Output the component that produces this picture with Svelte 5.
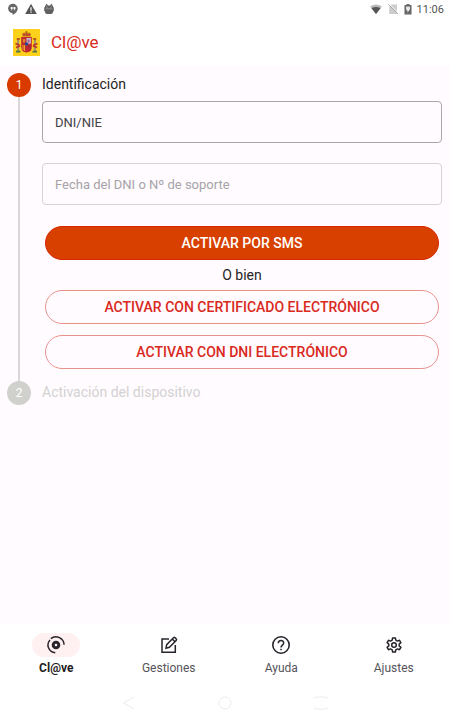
<script>
  const tabs = [
    { id: 'clave', label: 'Cl@ve' },
    { id: 'gestiones', label: 'Gestiones' },
    { id: 'ayuda', label: 'Ayuda' },
    { id: 'ajustes', label: 'Ajustes' }
  ];

  let active = 'clave';
  let dni = '';
  let support = '';
</script>

<div class="screen">
  <div class="status-bar">
    <div class="status-group left">
      <svg width="12" height="12" viewBox="0 0 12 12">
        <path d="M6 0.8a4.7 4.7 0 0 0-.4 9.4V12C8.6 10.6 10.7 8 10.7 5.4A4.7 4.7 0 0 0 6 .8z" fill="#666" />
        <path d="M3.7 4h1.9v2L4.7 7.3H4L4.5 6h-.8zM6.5 4h1.9v2L7.5 7.3h-.7L7.3 6h-.8z" fill="#fff" />
      </svg>
      <svg width="12" height="12" viewBox="0 0 12 12">
        <path d="M6 .8 11.8 11H.2z" fill="#555" />
        <path d="M5.4 4.2h1.2v3.5H5.4zM5.4 8.5h1.2v1.2H5.4z" fill="#fff" />
      </svg>
      <svg width="12" height="12" viewBox="0 0 12 12">
        <path d="M2 2.5h8v1.700h.8v4H10V9A2 2 0 0 1 8 11H4A2 2 0 0 1 2 9v-.8h-.8v-4H2z" fill="#606060" />
        <path d="M3.300 1 4.400 3M8.700 1 7.600 3" stroke="#606060" stroke-width="1.300" />
        <path d="M2.500 5.800h7M4 3.700v1.300M8 3.700v1.300" stroke="#aaa" stroke-width=".7" />
      </svg>
    </div>
    <div class="status-group right">
      <svg width="14" height="12" viewBox="0 0 14 12">
        <path d="M1 3.500Q7-.500 13 3.500L7 11z" fill="#bbb" />
        <path d="M2.500 5.300Q7 2.500 11.500 5.300L7 11z" fill="#555" />
      </svg>
      <svg width="12" height="12" viewBox="0 0 12 12">
        <path d="M4.500 1.500H10v9.500H2.200V4z" fill="#ccc" />
        <path d="M1.500 1.500 11 11" stroke="#aaa" stroke-width="1" />
        <path d="M2.300 1 11.500 10.200" stroke="#fff" stroke-width=".8" />
      </svg>
      <svg width="10" height="12" viewBox="0 0 10 12">
        <path d="M3.500 1h3v1H8.500v9.500h-7V2h2z" fill="#666" />
        <path d="M3 3.500h4v3H3z" fill="#ddd" />
        <path d="M5.500 4 3.300 7.500h1.500L4.300 10 6.800 6.300H5.300z" fill="#fff" />
      </svg>
      <span>11:06</span>
    </div>
  </div>

  <header>
    <svg class="crest" width="27" height="27" viewBox="0 0 27 27" aria-hidden="true">
      <path d="M0 0h27v27H0z" fill="#fbd11c" />
      <!-- crown -->
      <path d="M9.500 7.500 9 4.800Q10.500 3.300 13.500 3.600Q16.500 3.300 18 4.800L17.500 7.500z" fill="#c8741c" />
      <path d="M10.500 5h1.500v1.500h-1.500zM13 5h1.500v1.500H13zM15.500 5H17v1.500h-1.500z" fill="#b5283a" />
      <path d="M13.500 2v2.500M12.500 3h2" stroke="#a65a15" stroke-width=".8" />
      <!-- shield -->
      <path d="M8.200 8h10.600v10q0 5-5.300 5.500-5.300-.5-5.300-5.500z" fill="#c3272f" />
      <path d="M13.500 9h4.300v5.700h-4.300z" fill="#cfbfd0" />
      <path d="M14.500 10.500h2v3h-2z" fill="#9d5f96" />
      <path d="M9.800 10h2.400v3.500H9.800z" fill="#dc8a27" />
      <path d="M10 16v5M11.500 16v6" stroke="#f0b829" stroke-width=".9" />
      <path d="M15 16h2.500v4.500H15z" fill="#a82736" />
      <circle cx="13.500" cy="15" r="1.700" fill="#294e8f" />
      <!-- pillars -->
      <path d="M5.100 11v11M21.900 11v11" stroke="#a58f6a" stroke-width="2" />
      <path d="M3.800 10h3M20.200 10h3" stroke="#bb5820" stroke-width="1.800" />
      <path d="M2.500 14.500 7 16.500M24.500 14.500 20 16.500M3 18.500l4-1.500M24 18.500l-4-1.500" stroke="#bd3529" stroke-width="1.600" />
      <path d="M3 22.700h4.500M19.500 22.700H24" stroke="#56753e" stroke-width="1.800" />
    </svg>
    <h1>Cl@ve</h1>
  </header>

  <main>
    <section class="step">
      <div class="rail">
        <span class="badge">1</span>
        <span class="line"></span>
      </div>
      <div class="step-body">
        <h2>Identificación</h2>
        <form on:submit|preventDefault>
          <input class="field primary" type="text" placeholder="DNI/NIE" aria-label="DNI/NIE" bind:value={dni} />
          <input class="field" type="text" placeholder="Fecha del DNI o Nº de soporte" aria-label="Fecha del DNI o Nº de soporte" bind:value={support} />
          <div class="actions">
            <button class="btn filled" type="submit">ACTIVAR POR SMS</button>
            <p>O bien</p>
            <button class="btn" type="button">ACTIVAR CON CERTIFICADO ELECTRÓNICO</button>
            <button class="btn" type="button">ACTIVAR CON DNI ELECTRÓNICO</button>
          </div>
        </form>
      </div>
    </section>

    <section class="step disabled">
      <div class="rail">
        <span class="badge">2</span>
      </div>
      <div class="step-body">
        <h2>Activación del dispositivo</h2>
      </div>
    </section>
  </main>

  <nav class="tabs">
    {#each tabs as tab}
      <button class="tab" class:active={active === tab.id} on:click={() => (active = tab.id)}>
        <span class="pill">
          <svg width="20" height="20" viewBox="0 0 20 20" fill="none" stroke="currentColor" stroke-width="1.500">
            {#if tab.id === 'clave'}
              <path d="M4.800 3.600A8.200 8.200 0 0 1 18.100 9.800" />
              <path d="M4 5A7.600 7.600 0 0 0 9.300 17.700" />
              <circle cx="10" cy="10" r="2.800" stroke-width="3" />
            {:else if tab.id === 'gestiones'}
              <path d="M10 4H3v13.300h13.300V10" />
              <path d="M7 13.200l.7-3.600L14.500 2.800q.8-.8 1.600 0l1.100 1.100q.8.800 0 1.600L10.400 12.300zM13.300 4l2.700 2.700" />
            {:else if tab.id === 'ayuda'}
              <circle cx="10" cy="10" r="8.200" stroke-width="1.600" />
              <path d="M7.300 8.200C7.300 4.600 12.700 4.700 12.700 8c0 2-2.700 2.300-2.700 4.500M10 13.800v1.500" />
            {:else}
              <path d="M8.600 3h2.800l.4 2.200 1.600.9 2.100-.8 1.400 2.400-1.700 1.400v1.800l1.700 1.400-1.400 2.400-2.100-.8-1.600.9-.4 2.200H8.600l-.4-2.200-1.600-.9-2.100.8-1.400-2.400 1.700-1.400V9.100L3.100 7.700l1.400-2.400 2.100.8 1.600-.9z" stroke-linejoin="round" />
              <circle cx="10" cy="10" r="2.300" />
            {/if}
          </svg>
        </span>
        {tab.label}
      </button>
    {/each}
  </nav>

  <div class="system-nav">
    <button aria-label="Atrás">
      <svg width="14" height="14" viewBox="0 0 14 14"><path d="M12 1 1.500 7 12 13" /></svg>
    </button>
    <button aria-label="Inicio">
      <svg width="14" height="14" viewBox="0 0 14 14"><circle cx="7" cy="7" r="6" /></svg>
    </button>
    <button aria-label="Recientes">
      <svg width="14" height="14" viewBox="0 0 14 14"><path d="M1 3V1h12v2M1 11v2h12v-2" /></svg>
    </button>
  </div>
</div>

<style>
  :global(body) {
    margin: 0;
    background: #fff;
  }

  .screen {
    display: flex;
    flex-direction: column;
    min-height: 100vh;
    font-family: Roboto, sans-serif;
    font-size: 14px;
    color: #242424;
  }

  .screen * {
    box-sizing: border-box;
  }

  button,
  input {
    font-family: inherit;
  }

  svg {
    display: block;
    flex-shrink: 0;
  }

  .status-bar {
    display: flex;
    justify-content: space-between;
    height: 18px;
    padding: 0 6px 0 7px;
    font-size: 11px;
    color: #555;
  }

  .status-group {
    display: flex;
    align-items: center;
  }

  .left {
    gap: 6px;
  }

  .right {
    gap: 4px;
  }

  header {
    display: flex;
    align-items: center;
    gap: 11px;
    height: 48px;
    padding: 0 13px;
  }

  h1 {
    margin: 0;
    font-size: 17px;
    font-weight: 400;
    color: #d92b20;
  }

  main {
    flex: 1;
    padding: 7px 8px 24px 7px;
    background: #fffbff;
  }

  .step {
    display: flex;
    gap: 11px;
  }

  .rail {
    display: flex;
    flex-direction: column;
    align-items: center;
    width: 24px;
  }

  .badge {
    width: 24px;
    height: 24px;
    border-radius: 50%;
    background: #d93a00;
    color: #fff;
    font-size: 12px;
    line-height: 24px;
    text-align: center;
  }

  .line {
    flex: 1;
    width: 2px;
    background: #d8d8d6;
  }

  .step-body {
    flex: 1;
    min-width: 0;
  }

  h2 {
    margin: 0;
    font-size: 14px;
    font-weight: 400;
    line-height: 22px;
  }

  form {
    display: flex;
    flex-direction: column;
    gap: 20px;
    padding: 6px 0 12px;
  }

  .field {
    width: 100%;
    height: 42px;
    padding: 0 12px;
    border: 1px solid #d5d3d6;
    border-radius: 4px;
    background: transparent;
    font-size: 13px;
    color: #333;
  }

  .field::placeholder {
    color: #a5a3a7;
    opacity: 1;
  }

  .field.primary {
    border-color: #aaa7ab;
  }

  .field.primary::placeholder {
    color: #444247;
  }

  .actions {
    display: flex;
    flex-direction: column;
    padding: 1px 3px 0;
  }

  .actions p {
    margin: 0;
    line-height: 30px;
    text-align: center;
  }

  .btn {
    height: 34px;
    padding: 0;
    border: 1px solid #e9938b;
    border-radius: 17px;
    background: transparent;
    color: #d9291c;
    font-size: 14px;
    font-weight: 500;
    cursor: pointer;
  }

  .btn.filled {
    border-color: #d92500;
    background: #d84000;
    color: #fff;
  }

  .btn + .btn {
    margin-top: 11px;
  }

  .disabled h2 {
    color: #d2d2d0;
  }

  .disabled .badge {
    background: #d0d1cd;
  }

  .tabs {
    display: grid;
    grid-template-columns: repeat(4, 1fr);
    padding-top: 9px;
  }

  .tab {
    display: flex;
    flex-direction: column;
    align-items: center;
    gap: 2px;
    padding: 0;
    border: none;
    background: transparent;
    color: #55545a;
    font-size: 12px;
    line-height: 18px;
    cursor: pointer;
  }

  .tab.active {
    color: #1f1d22;
    font-weight: 700;
  }

  .pill {
    display: flex;
    align-items: center;
    justify-content: center;
    width: 48px;
    height: 24px;
    border-radius: 12px;
    color: #29242c;
  }

  .active .pill {
    background: #fff0f2;
  }

  .system-nav {
    display: flex;
    justify-content: center;
    gap: 82px;
    padding: 19px 0 10px;
  }

  .system-nav button {
    padding: 0;
    border: none;
    background: transparent;
  }

  .system-nav svg {
    fill: none;
    stroke: #ececec;
  }
</style>
